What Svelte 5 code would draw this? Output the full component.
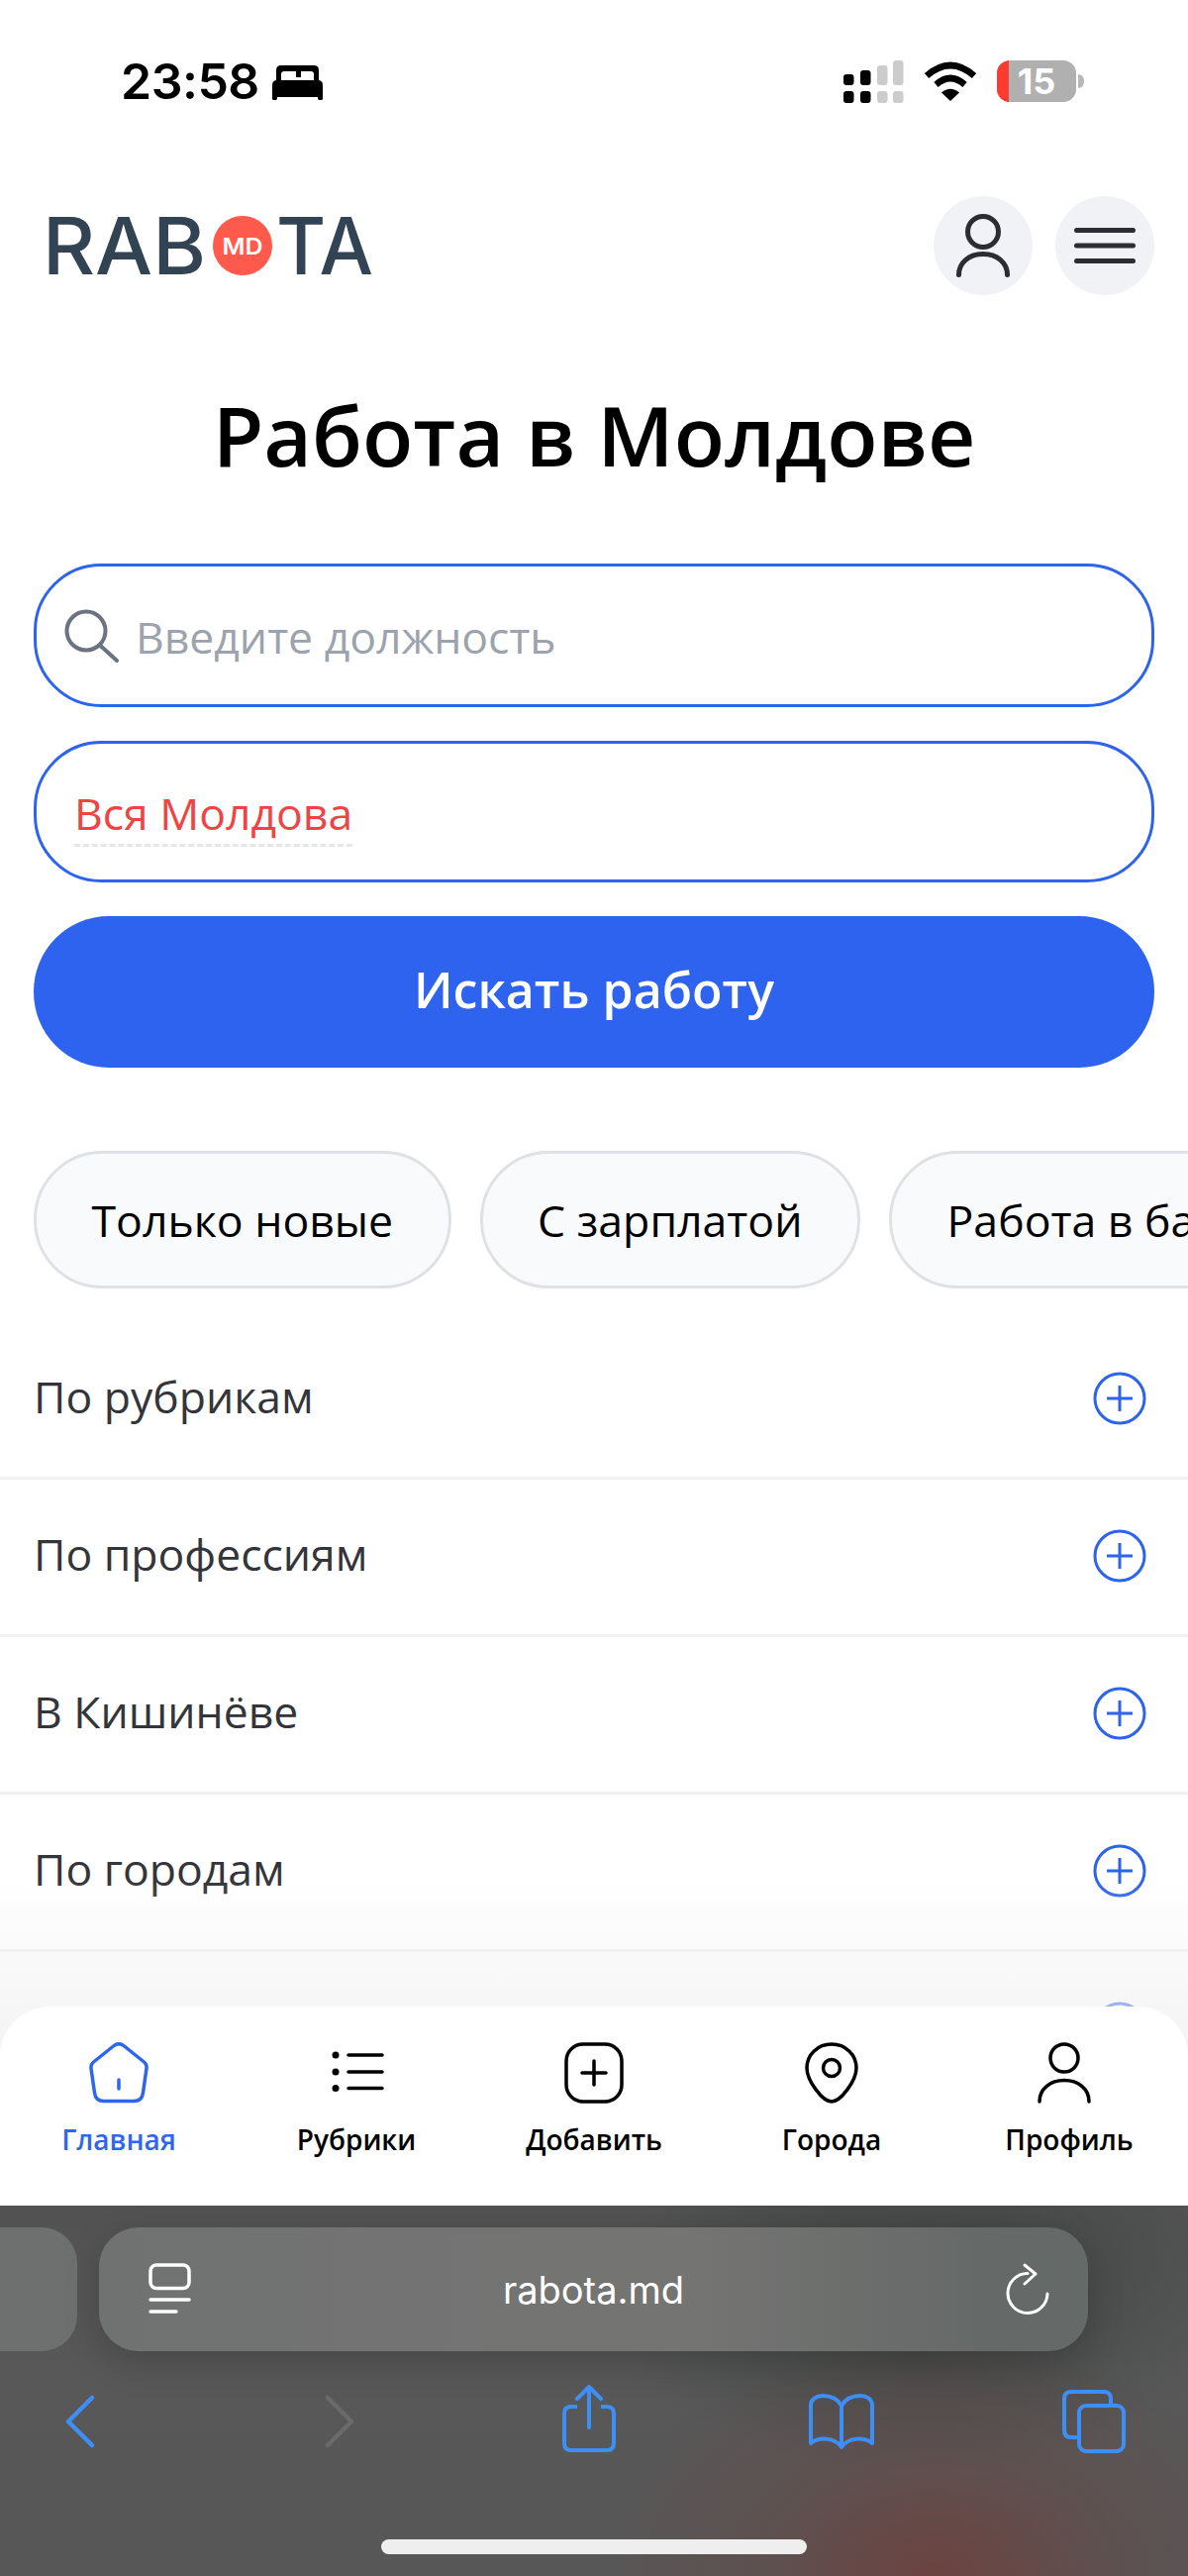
<script>
  const rows = ['По рубрикам', 'По профессиям', 'В Кишинёве', 'По городам', ''];
  const chips = ['Только новые', 'С зарплатой', 'Работа в банках'];
  const signal = [
    { x: 0, y: 14, h: 11, c: '#000' },
    { x: 17, y: 10, h: 15, c: '#000' },
    { x: 34, y: 5, h: 20, c: '#ccc' },
    { x: 50, y: 0, h: 25, c: '#ccc' }
  ];
</script>

<div class="screen">
  <div class="status">
    <div class="status-left">
      <span class="time">23:58</span>
      <svg class="bed" width="51" height="35" viewBox="0 0 51 35" aria-hidden="true">
        <path d="M4 15V5Q4 0 9 0H42Q47 0 47 5V15H42V9Q42 6 39 6H29V12H24V6H12Q9 6 9 9V15Z" fill="#000"/>
        <path d="M5 15H46Q51 15 51 20V33.500Q51 35 49.500 35H47.500Q46 35 46 33V32H5V33Q5 35 3.500 35H1.500Q0 35 0 33.500V20Q0 15 5 15Z" fill="#000"/>
      </svg>
    </div>
    <div class="status-right">
      <svg width="61" height="43" viewBox="0 0 61 43" aria-hidden="true">
        {#each signal as s}
          <rect x={s.x} y={s.y} width="10.500" height={s.h} rx="3" fill={s.c}/>
          <rect x={s.x} y="31" width="10.500" height="12" rx="3" fill={s.c}/>
        {/each}
      </svg>
      <svg width="54" height="40" viewBox="0 0 54 40" aria-hidden="true">
        <path d="M3 14.500Q27 -6.500 51 14.500" fill="none" stroke="#000" stroke-width="6.500"/>
        <path d="M12.500 23.500Q27 10.500 41.500 23.500" fill="none" stroke="#000" stroke-width="6.500"/>
        <path d="M18 31.500Q27 24 36 31.500L27 40Z" fill="#000"/>
      </svg>
      <div class="battery">
        <div class="battery-body"><span class="battery-red"></span><span class="battery-num">15</span></div>
        <span class="battery-tip"></span>
      </div>
    </div>
  </div>

  <header class="header">
    <svg class="logo" width="340" height="62" viewBox="0 0 340 62" role="img" aria-label="RABOTA MD">
      <text x="0" y="60" class="logo-text" textLength="165" lengthAdjust="spacingAndGlyphs">RAB</text>
      <circle cx="202" cy="31" r="30" fill="#ff5a4b"/>
      <text x="202" y="39.500" class="logo-md" text-anchor="middle" textLength="41" lengthAdjust="spacingAndGlyphs">MD</text>
      <text x="236" y="60" class="logo-text" textLength="98" lengthAdjust="spacingAndGlyphs">TA</text>
    </svg>
    <div class="header-actions">
      <div class="round">
        <svg width="60" height="66" viewBox="0 0 60 66" aria-hidden="true">
          <circle cx="30" cy="19" r="15.500" fill="none" stroke="#2b2d33" stroke-width="5"/>
          <path d="M5.500 62.500C5.500 50 16 41.500 30 41.500S54.500 50 54.500 62.500" fill="none" stroke="#2b2d33" stroke-width="5" stroke-linecap="round"/>
        </svg>
      </div>
      <div class="round">
        <svg width="62" height="36" viewBox="0 0 62 36" aria-hidden="true">
          <path d="M2.500 2.500H59.500M2.500 18H59.500M2.500 33.500H59.500" fill="none" stroke="#2b2d33" stroke-width="5" stroke-linecap="round"/>
        </svg>
      </div>
    </div>
  </header>

  <h1 class="title">Работа в Молдове</h1>

  <div class="form">
    <div class="field">
      <svg class="search" width="56" height="54" viewBox="0 0 56 54" aria-hidden="true">
        <circle cx="22" cy="22" r="19.500" fill="none" stroke="#6b7280" stroke-width="4"/>
        <path d="M36 36.500L53 52" fill="none" stroke="#6b7280" stroke-width="4" stroke-linecap="round"/>
      </svg>
      <span class="placeholder">Введите должность</span>
    </div>
    <div class="field field-region">
      <span class="region">Вся Молдова</span>
    </div>
    <button class="submit">Искать работу</button>
  </div>

  <div class="chips">
    {#each chips as chip}
      <div class="chip">{chip}</div>
    {/each}
  </div>

  <div class="list">
    {#each rows as row}
      <div class="row">
        <span class="row-label">{row}</span>
        <svg class="row-icon" width="54" height="54" viewBox="0 0 54 54" aria-hidden="true">
          <circle cx="27" cy="27" r="25" fill="none" stroke="#2d63ef" stroke-width="3"/>
          <path d="M14 27H40M27 14V40" fill="none" stroke="#2d63ef" stroke-width="3"/>
        </svg>
      </div>
    {/each}
  </div>

  <div class="dock">
    <div class="fade"></div>
    <nav class="nav">
      <div class="nav-item active">
        <svg width="60" height="62" viewBox="0 0 60 62" aria-hidden="true">
          <path d="M24.500 4Q30 -.5 35.500 4L55.500 20Q58.500 22.500 58 26.500L54.500 51Q53.500 59.500 45 59.500H15Q6.500 59.500 5.500 51L2 26.500Q1.500 22.500 4.500 20Z" fill="none" stroke="#2f66ee" stroke-width="3.500" stroke-linejoin="round"/>
          <path d="M30 38V47" fill="none" stroke="#2f66ee" stroke-width="3.500" stroke-linecap="round"/>
        </svg>
        <span>Главная</span>
      </div>
      <div class="nav-item">
        <svg class="icon-list" width="56" height="62" viewBox="0 0 56 62" aria-hidden="true">
          <circle cx="5" cy="13" r="3.500"/><circle cx="5" cy="30" r="3.500"/><circle cx="5" cy="46.500" r="3.500"/>
          <path d="M18 13H52M18 30H52M18 46.500H52" fill="none" stroke="#000" stroke-width="3.500" stroke-linecap="round"/>
        </svg>
        <span>Рубрики</span>
      </div>
      <div class="nav-item">
        <svg width="60" height="62" viewBox="0 0 60 62" aria-hidden="true">
          <rect x="2" y="2" width="56" height="58" rx="17" fill="none" stroke="#000" stroke-width="3.500"/>
          <path d="M18 31H42M30 19V43" fill="none" stroke="#000" stroke-width="3.500" stroke-linecap="round"/>
        </svg>
        <span>Добавить</span>
      </div>
      <div class="nav-item">
        <svg width="54" height="62" viewBox="0 0 54 62" aria-hidden="true">
          <path d="M27 2C13 2 2 12.500 2 26C2 39 18 60 27 60C36 60 52 39 52 26C52 12.500 41 2 27 2Z" fill="none" stroke="#000" stroke-width="3.500"/>
          <circle cx="27" cy="26" r="8.500" fill="none" stroke="#000" stroke-width="3.500"/>
        </svg>
        <span>Города</span>
      </div>
      <div class="nav-item">
        <svg class="icon-profile" width="54" height="62" viewBox="0 0 54 62" aria-hidden="true">
          <circle cx="27" cy="16" r="14" fill="none" stroke="#000" stroke-width="3.500"/>
          <path d="M2 60C2 47 13 38.500 27 38.500S52 47 52 60" fill="none" stroke="#000" stroke-width="3.500" stroke-linecap="round"/>
        </svg>
        <span>Профиль</span>
      </div>
    </nav>

    <div class="chrome">
      <div class="urlrow">
        <div class="prev-tab"></div>
        <div class="urlbar">
          <svg width="44" height="54" viewBox="0 0 44 54" aria-hidden="true">
            <rect x="2" y="2" width="39" height="23.500" rx="6" fill="none" stroke="#fff" stroke-width="3.500"/>
            <path d="M2 37H41M2 49H28" fill="none" stroke="#fff" stroke-width="3.500" stroke-linecap="round"/>
          </svg>
          <span class="url">rabota.md</span>
          <svg width="44" height="54" viewBox="0 0 44 54" aria-hidden="true">
            <path d="M22 10.500A20 20 0 1 0 42 31" fill="none" stroke="#fff" stroke-width="3" stroke-linecap="round"/>
            <path d="M19 2L30 11L19 21" fill="none" stroke="#fff" stroke-width="3" stroke-linecap="round" stroke-linejoin="round"/>
          </svg>
        </div>
      </div>
      <div class="tools">
        <svg class="tool-back" width="32" height="54" viewBox="0 0 32 54" aria-hidden="true">
          <path d="M28 3L4 27L28 51" fill="none" stroke="#3e8ef7" stroke-width="4.500" stroke-linecap="round" stroke-linejoin="round"/>
        </svg>
        <svg class="tool-forward" width="32" height="54" viewBox="0 0 32 54" aria-hidden="true">
          <path d="M4 3L28 27L4 51" fill="none" stroke="#6a6a6a" stroke-width="4.500" stroke-linecap="round" stroke-linejoin="round"/>
        </svg>
        <svg class="tool-share" width="54" height="68" viewBox="0 0 54 68" aria-hidden="true">
          <path d="M15 22H9Q2 22 2 29V59Q2 66 9 66H45Q52 66 52 59V29Q52 22 45 22H39" fill="none" stroke="#3e8ef7" stroke-width="4"/>
          <path d="M27 3V43M15 14L27 2L39 14" fill="none" stroke="#3e8ef7" stroke-width="4" stroke-linecap="round" stroke-linejoin="round"/>
        </svg>
        <svg class="tool-book" width="68" height="56" viewBox="0 0 68 56" aria-hidden="true">
          <path d="M34 12C30 5 24 2 15 2C9 2 3 5 3 12V50C10 44 27 43 34 54C41 43 58 44 65 50V12C65 5 59 2 53 2C44 2 38 5 34 12V52" fill="none" stroke="#3e8ef7" stroke-width="4" stroke-linejoin="round"/>
        </svg>
        <svg class="tool-tabs" width="64" height="64" viewBox="0 0 64 64" aria-hidden="true">
          <path d="M49 14V9Q49 2 42 2H9Q2 2 2 9V41Q2 48 9 48H16" fill="none" stroke="#3e8ef7" stroke-width="4"/>
          <rect x="17" y="16" width="45" height="46" rx="7" fill="none" stroke="#3e8ef7" stroke-width="4"/>
        </svg>
      </div>
      <div class="home-indicator"></div>
    </div>
  </div>
</div>

<style>
  :global(body) {
    margin: 0;
    background: #fff;
  }
  .screen {
    position: relative;
    width: 1200px;
    height: 2601px;
    overflow: hidden;
    background: #fff;
    font-family: "Open Sans", "Noto Sans", sans-serif;
    color: #000;
  }
  .status {
    height: 164px;
    padding: 0 105px 0 122px;
    display: flex;
    align-items: center;
    justify-content: space-between;
    font-family: Inter, sans-serif;
  }
  .status-left {
    display: flex;
    align-items: center;
    gap: 13px;
  }
  .time {
    font-size: 50px;
    font-weight: 600;
    line-height: 60px;
    letter-spacing: -.5px;
  }
  .bed {
    margin-top: 2px;
  }
  .status-right {
    display: flex;
    align-items: center;
    gap: 20px;
  }
  .battery {
    display: flex;
    align-items: center;
    gap: 2px;
  }
  .battery-body {
    position: relative;
    width: 80px;
    height: 42px;
    border-radius: 13px;
    overflow: hidden;
    background: #b0b0b0;
    display: flex;
    align-items: center;
    justify-content: center;
  }
  .battery-red {
    position: absolute;
    inset: 0 auto 0 0;
    width: 12px;
    background: #ff3b30;
  }
  .battery-num {
    color: #fff;
    font-size: 36px;
    font-weight: 700;
    line-height: 1;
  }
  .battery-tip {
    width: 6px;
    height: 14px;
    border-radius: 0 7px 7px 0;
    background: #b8b8b8;
  }
  .header {
    display: flex;
    align-items: center;
    justify-content: space-between;
    padding: 34px 34px 0 43px;
  }
  .logo {
    overflow: visible;
  }
  .logo-text {
    font-family: Inter, sans-serif;
    font-weight: 500;
    font-size: 80px;
    fill: #324354;
  }
  .logo-md {
    font-family: Inter, sans-serif;
    font-weight: 600;
    font-size: 23px;
    fill: #fff;
  }
  .header-actions {
    display: flex;
    gap: 23px;
  }
  .round {
    width: 100px;
    height: 100px;
    border-radius: 50%;
    background: #f1f2f6;
    display: flex;
    align-items: center;
    justify-content: center;
  }
  .title {
    margin: 83px 0 0;
    font-size: 84px;
    line-height: 116px;
    font-weight: 600;
    text-align: center;
  }
  .form {
    margin-top: 72px;
    padding: 0 34px;
    display: flex;
    flex-direction: column;
    gap: 34px;
  }
  .field {
    height: 145px;
    box-sizing: border-box;
    border: 3px solid #2d63ef;
    border-radius: 68px;
    display: flex;
    align-items: center;
    padding: 0 0 0 28px;
    gap: 16px;
  }
  .field-region {
    height: 143px;
    padding-left: 38px;
  }
  .placeholder {
    margin-top: 1px;
    font-size: 44.500px;
    color: #9ca3af;
  }
  .region {
    margin-top: 6px;
    font-size: 44.500px;
    line-height: 62px;
    color: #ef4444;
    border-bottom: 3px dashed #e5e7eb;
  }
  .submit {
    height: 153px;
    padding: 0 0 6px;
    border: 0;
    border-radius: 76px;
    background: #2d63ef;
    color: #fff;
    font-family: inherit;
    font-size: 50px;
    font-weight: 600;
  }
  .chips {
    display: flex;
    gap: 29px;
    padding-left: 34px;
    margin-top: 84px;
  }
  .chip {
    flex: none;
    height: 139px;
    box-sizing: border-box;
    padding: 0 55.500px;
    border: 3px solid #e0e1e4;
    border-radius: 69px;
    background: #f9fafb;
    font-size: 44.600px;
    display: flex;
    align-items: center;
  }
  .list {
    margin-top: 34px;
  }
  .row {
    height: 159px;
    box-sizing: border-box;
    border-bottom: 3px solid #f1f1f1;
    padding: 0 42px 0 34px;
    display: flex;
    align-items: center;
    justify-content: space-between;
    font-size: 44.500px;
    color: #33353a;
  }
  .row-label {
    margin-top: -7px;
  }
  .row-icon {
    margin-top: -3px;
  }
  .dock {
    position: absolute;
    left: 0;
    right: 0;
    bottom: 0;
  }
  .fade {
    position: absolute;
    left: 0;
    right: 0;
    top: -130px;
    height: 180px;
    background: linear-gradient(to bottom, rgba(240, 240, 240, 0), rgba(240, 240, 240, .8));
  }
  .nav {
    position: relative;
    height: 201px;
    box-sizing: border-box;
    padding-top: 36px;
    background: #fff;
    border-radius: 50px 50px 0 0;
    display: grid;
    grid-template-columns: repeat(5, 1fr);
  }
  .nav-item {
    display: flex;
    flex-direction: column;
    align-items: center;
    gap: 17px;
    font-size: 28px;
    font-weight: 600;
    line-height: 38px;
    color: #000;
  }
  .nav-item.active {
    color: #2f66ee;
  }
  .icon-list {
    margin-left: 3px;
  }
  .icon-profile {
    margin-left: -10px;
  }
  .chrome {
    position: relative;
    height: 374px;
    background:
      radial-gradient(ellipse 340px 240px at 945px 374px, rgba(125, 50, 45, .55), rgba(125, 50, 45, .18) 50%, rgba(125, 50, 45, 0)),
      radial-gradient(ellipse 320px 180px at 930px 90px, rgba(50, 56, 54, .6), rgba(50, 56, 54, 0)),
      linear-gradient(to bottom, #515251, #585858 45%, #575757);
  }
  .urlrow {
    position: absolute;
    top: 22px;
    left: 0;
    right: 101px;
    display: flex;
    gap: 22px;
    height: 125px;
  }
  .prev-tab {
    width: 78px;
    border-radius: 0 36px 36px 0;
    background: #6e706f;
  }
  .urlbar {
    flex: 1;
    border-radius: 40px;
    background: linear-gradient(90deg, #707271, #747473 60%, #656967 90%);
    box-shadow: 0 12px 36px rgba(0, 0, 0, .18);
    display: flex;
    align-items: center;
    justify-content: space-between;
    padding: 0 39px 0 50px;
  }
  .url {
    margin-right: 11px;
    font-family: Inter, sans-serif;
    font-size: 38px;
    color: #fff;
  }
  .tools {
    position: absolute;
    inset: 0;
  }
  .tools svg {
    position: absolute;
  }
  .tool-back { left: 65px; top: 191px; }
  .tool-forward { left: 327px; top: 191px; }
  .tool-share { left: 568px; top: 181px; }
  .tool-book { left: 816px; top: 190px; }
  .tool-tabs { left: 1073px; top: 186px; }
  .home-indicator {
    position: absolute;
    left: 385px;
    top: 337px;
    width: 430px;
    height: 15px;
    border-radius: 8px;
    background: #eee;
  }
</style>
